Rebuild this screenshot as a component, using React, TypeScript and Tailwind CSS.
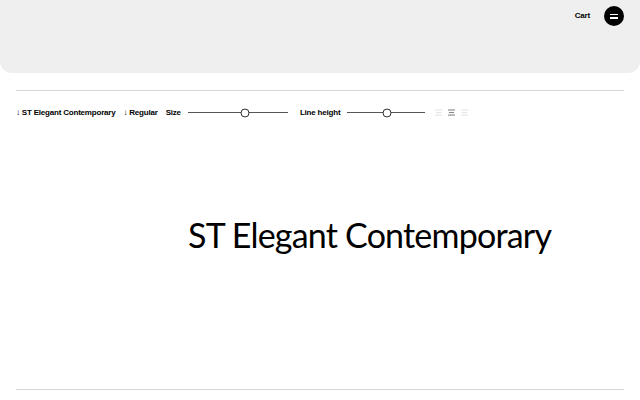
import { useState } from 'react'

const Slider = ({ width, pos }: { width: number; pos: number }) => (
  <div className="relative h-[10px] flex items-center" style={{ width }}>
    <div className="w-full h-px bg-[#555]" />
    <div
      className="absolute top-1/2 -translate-y-1/2 -translate-x-1/2 w-[9px] h-[9px] rounded-full border border-[#333] bg-white"
      style={{ left: pos }}
    />
  </div>
)

const AlignIcon = ({ active }: { active?: boolean }) => (
  <svg width="7" height="7" viewBox="0 0 8 8" className={active ? 'text-[#8a8a8a]' : 'text-[#e4e4e4]'}>
    <rect x="0" y="0.5" width="8" height="1.3" fill="currentColor" />
    <rect x="1" y="3.4" width="6" height="1.3" fill="currentColor" />
    <rect x="0" y="6.3" width="8" height="1.3" fill="currentColor" />
  </svg>
)

const App = () => {
  const [size] = useState(57)
  const [lineHeight] = useState(40)

  return (
    <div className="w-[640px] h-[400px] bg-white overflow-hidden font-['Liberation_Sans',Arial,sans-serif] text-black">
      <header className="h-[73px] bg-[#efefef] rounded-b-[12px] flex justify-end items-start pt-[6px] pr-[16px]">
        <div className="flex items-center gap-[14px]">
          <span className="text-[8px] font-bold tracking-tight">Cart</span>
          <button className="w-[20px] h-[20px] rounded-full bg-black flex flex-col items-center justify-center gap-[2px]">
            <span className="block w-[8px] h-[1.5px] bg-white" />
            <span className="block w-[8px] h-[1.5px] bg-white" />
          </button>
        </div>
      </header>
      <main className="px-[16px]">
        <div className="mt-[17px] h-px bg-[#d6d6d6]" />
        <div className="h-[43px] flex items-center text-[8px] font-bold tracking-tight">
          <span className="flex items-center">
            <span className="mr-[2px] font-normal">↓</span>ST Elegant Contemporary
          </span>
          <span className="flex items-center ml-[8px]">
            <span className="mr-[2px] font-normal">↓</span>Regular
          </span>
          <span className="ml-[8px]">Size</span>
          <div className="ml-[7px]">
            <Slider width={100} pos={size} />
          </div>
          <span className="ml-[12px]">Line height</span>
          <div className="ml-[7px]">
            <Slider width={78} pos={lineHeight} />
          </div>
          <div className="ml-[10px] flex items-center gap-[6px]">
            <AlignIcon />
            <AlignIcon active />
            <AlignIcon />
          </div>
        </div>
        <div className="h-[255px] flex items-center pl-[172px] pb-[54px]">
          <p className="text-[34px] leading-none font-['Lato',sans-serif] font-normal tracking-[-0.8px] whitespace-nowrap">
            ST Elegant Contemporary
          </p>
        </div>
        <div className="h-px bg-[#d6d6d6]" />
      </main>
    </div>
  )
}

export default App
